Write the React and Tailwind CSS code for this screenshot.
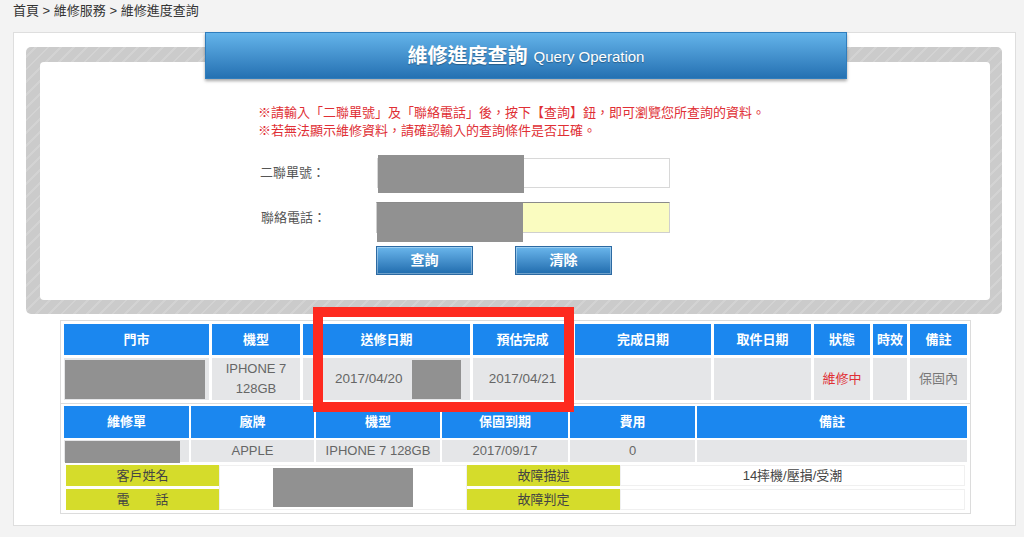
import React from "react";

const head1 = [
  { t: "門市" },
  { t: "機型" },
  { t: "送修日期" },
  { t: "預估完成" },
  { t: "完成日期" },
  { t: "取件日期" },
  { t: "狀態" },
  { t: "時效" },
  { t: "備註" },
];

const head2 = ["維修單", "廠牌", "機型", "保固到期", "費用", "備註"];

function Redact({ className = "" }) {
  return <div className={"bg-[#919191] " + className} />;
}

function BlueButton({ children }) {
  return (
    <button className="h-[29px] w-[97px] border border-[#2c6aa3] bg-linear-to-b from-[#6ab6ec] to-[#1f6cad] text-[14px] font-bold text-white shadow-[inset_0_0_0_1px_rgba(255,255,255,0.35)]">
      {children}
    </button>
  );
}

export default function App() {
  return (
    <div className="min-h-[537px] w-[1024px] bg-[#f3f3f3] font-['Liberation_Sans','Noto_Sans_CJK_TC',sans-serif] text-[13px] text-[#333]">
      {/* Breadcrumb */}
      <div className="h-[22px] pl-[13px] leading-[22px] text-[#333]">
        首頁 &gt; 維修服務 &gt; 維修進度查詢
      </div>

      {/* Main panel */}
      <div className="ml-[13px] mt-[10px] w-[1003px] border border-[#dedede] bg-white pl-[12px] pt-[14px] pb-[11px]">
        {/* Striped frame */}
        <div className="relative h-[267px] w-[976px] rounded-[5px] bg-[repeating-linear-gradient(-45deg,#cbcbcb_0px,#cbcbcb_7px,#d3d3d3_7px,#d3d3d3_9px)] pl-[14px] pt-[15px]">
          <div className="h-[238px] w-[950px] rounded-[4px] bg-white pl-[218px] pt-[42px]">
            <div className="text-[13px] leading-[18px] text-[#e02f35]">
              <div>※請輸入「二聯單號」及「聯絡電話」後，按下【查詢】鈕，即可瀏覽您所查詢的資料。</div>
              <div>※若無法顯示維修資料，請確認輸入的查詢條件是否正確。</div>
            </div>

            <div className="mt-[18px] flex items-center">
              <div className="w-[119px] pl-[2px] text-[#555]">二聯單號：</div>
              <div className="relative h-[30px] w-[293px] border border-[#d8d8d8] bg-white">
                <Redact className="absolute -top-[4px] left-0 h-[38px] w-[146px]" />
              </div>
            </div>

            <div className="mt-[14px] flex items-center">
              <div className="w-[118px] pl-[3px] text-[#555]">聯絡電話：</div>
              <div className="relative h-[31px] w-[294px] border border-[#cfcfcf] border-t-[#8a8a8a] bg-[#fafcc0]">
                <Redact className="absolute top-0 left-0 h-[39px] w-[146px]" />
              </div>
            </div>

            <div className="mt-[13px] flex gap-[42px] pl-[118px]">
              <BlueButton>查詢</BlueButton>
              <BlueButton>清除</BlueButton>
            </div>
          </div>

          {/* Title bar */}
          <div className="absolute -top-[15px] left-[179px] flex h-[47px] w-[642px] items-center justify-center gap-[6px] border border-[#2f7dbd] bg-linear-to-b from-[#64b4ea] to-[#2471b2] text-white shadow-[0_2px_3px_rgba(0,0,0,0.35)]">
            <span className="text-[20px] font-bold [text-shadow:0_1px_1px_rgba(0,0,0,0.3)]">維修進度查詢</span>
            <span className="mt-[3px] text-[15px] [text-shadow:0_1px_1px_rgba(0,0,0,0.3)]">Query Operation</span>
          </div>
        </div>

        {/* Tables */}
        <div className="relative ml-[34px] mt-[6px] w-[911px]">
          <div className="border border-[#dcdcdc] p-[3px]">
            <div className="grid grid-cols-[145px_88px_167px_99px_136px_97px_56px_34px_57px] gap-[3px]">
              {head1.map((h) => (
                <div key={h.t} className="flex h-[31px] items-center justify-center bg-[#1b87ef] font-bold text-white">
                  {h.t}
                </div>
              ))}
              <div className="flex h-[42px] items-center bg-[#e5e6e8] pl-[1px]">
                <Redact className="h-[39px] w-[140px]" />
              </div>
              <div className="flex flex-col items-center justify-center bg-[#e5e6e8] leading-[20px] text-[#666]">
                <span>IPHONE 7</span>
                <span>128GB</span>
              </div>
              <div className="flex items-center bg-[#e5e6e8] pl-[32px] text-[13.5px] text-[#666]">
                <span>2017/04/20</span>
                <Redact className="ml-[9px] h-[39px] w-[49px]" />
              </div>
              <div className="flex items-center justify-center bg-[#e5e6e8] text-[13.5px] text-[#666]">2017/04/21</div>
              <div className="bg-[#e5e6e8]" />
              <div className="bg-[#e5e6e8]" />
              <div className="flex items-center justify-center bg-[#e5e6e8] text-[#e02f35]">維修中</div>
              <div className="bg-[#e5e6e8]" />
              <div className="flex items-center justify-center bg-[#e5e6e8] text-[#777]">保固內</div>
            </div>
          </div>

          <div className="border border-t-0 border-[#dcdcdc] px-[3px] pt-[2px] pb-[3px]">
            <div className="grid grid-cols-[125px_123px_124px_126px_125px_270px] gap-[2px]">
              {head2.map((h) => (
                <div key={h} className="flex h-[32px] items-center justify-center bg-[#1b87ef] font-bold text-white">
                  {h}
                </div>
              ))}
              <div className="flex h-[22px] items-center bg-[#e5e6e8] pl-[1px]">
                <Redact className="mt-[2px] h-[22px] w-[115px]" />
              </div>
              <div className="flex items-center justify-center bg-[#e5e6e8] text-[#666]">APPLE</div>
              <div className="flex items-center justify-center bg-[#e5e6e8] text-[#666]">IPHONE 7 128GB</div>
              <div className="flex items-center justify-center bg-[#e5e6e8] text-[#666]">2017/09/17</div>
              <div className="flex items-center justify-center bg-[#e5e6e8] text-[#666]">0</div>
              <div className="bg-[#e5e6e8]" />
            </div>

            <div className="mt-[3px] grid grid-cols-[153px_248px_153px_345px] grid-rows-[21px_21px] gap-y-[3px] px-[2px]">
              <div className="flex items-center justify-center bg-[#d5dc2b] text-[#444]">客戶姓名</div>
              <div className="row-span-2 flex items-center justify-center border border-[#f0f0f0] bg-white">
                <Redact className="h-[39px] w-[140px]" />
              </div>
              <div className="flex items-center justify-center bg-[#d5dc2b] text-[#444]">故障描述</div>
              <div className="flex items-center justify-center border border-[#f0f0f0] bg-white text-[#444]">14摔機/壓損/受潮</div>
              <div className="flex items-center justify-center bg-[#d5dc2b] text-[#444]">電　　話</div>
              <div className="flex items-center justify-center bg-[#d5dc2b] text-[#444]">故障判定</div>
              <div className="border border-[#f0f0f0] bg-white" />
            </div>
          </div>

          {/* Highlight box */}
          <div className="absolute -top-[13px] left-[253px] h-[105px] w-[261px] border-[10px] border-[#fe2a1f]" />
        </div>
      </div>
    </div>
  );
}
